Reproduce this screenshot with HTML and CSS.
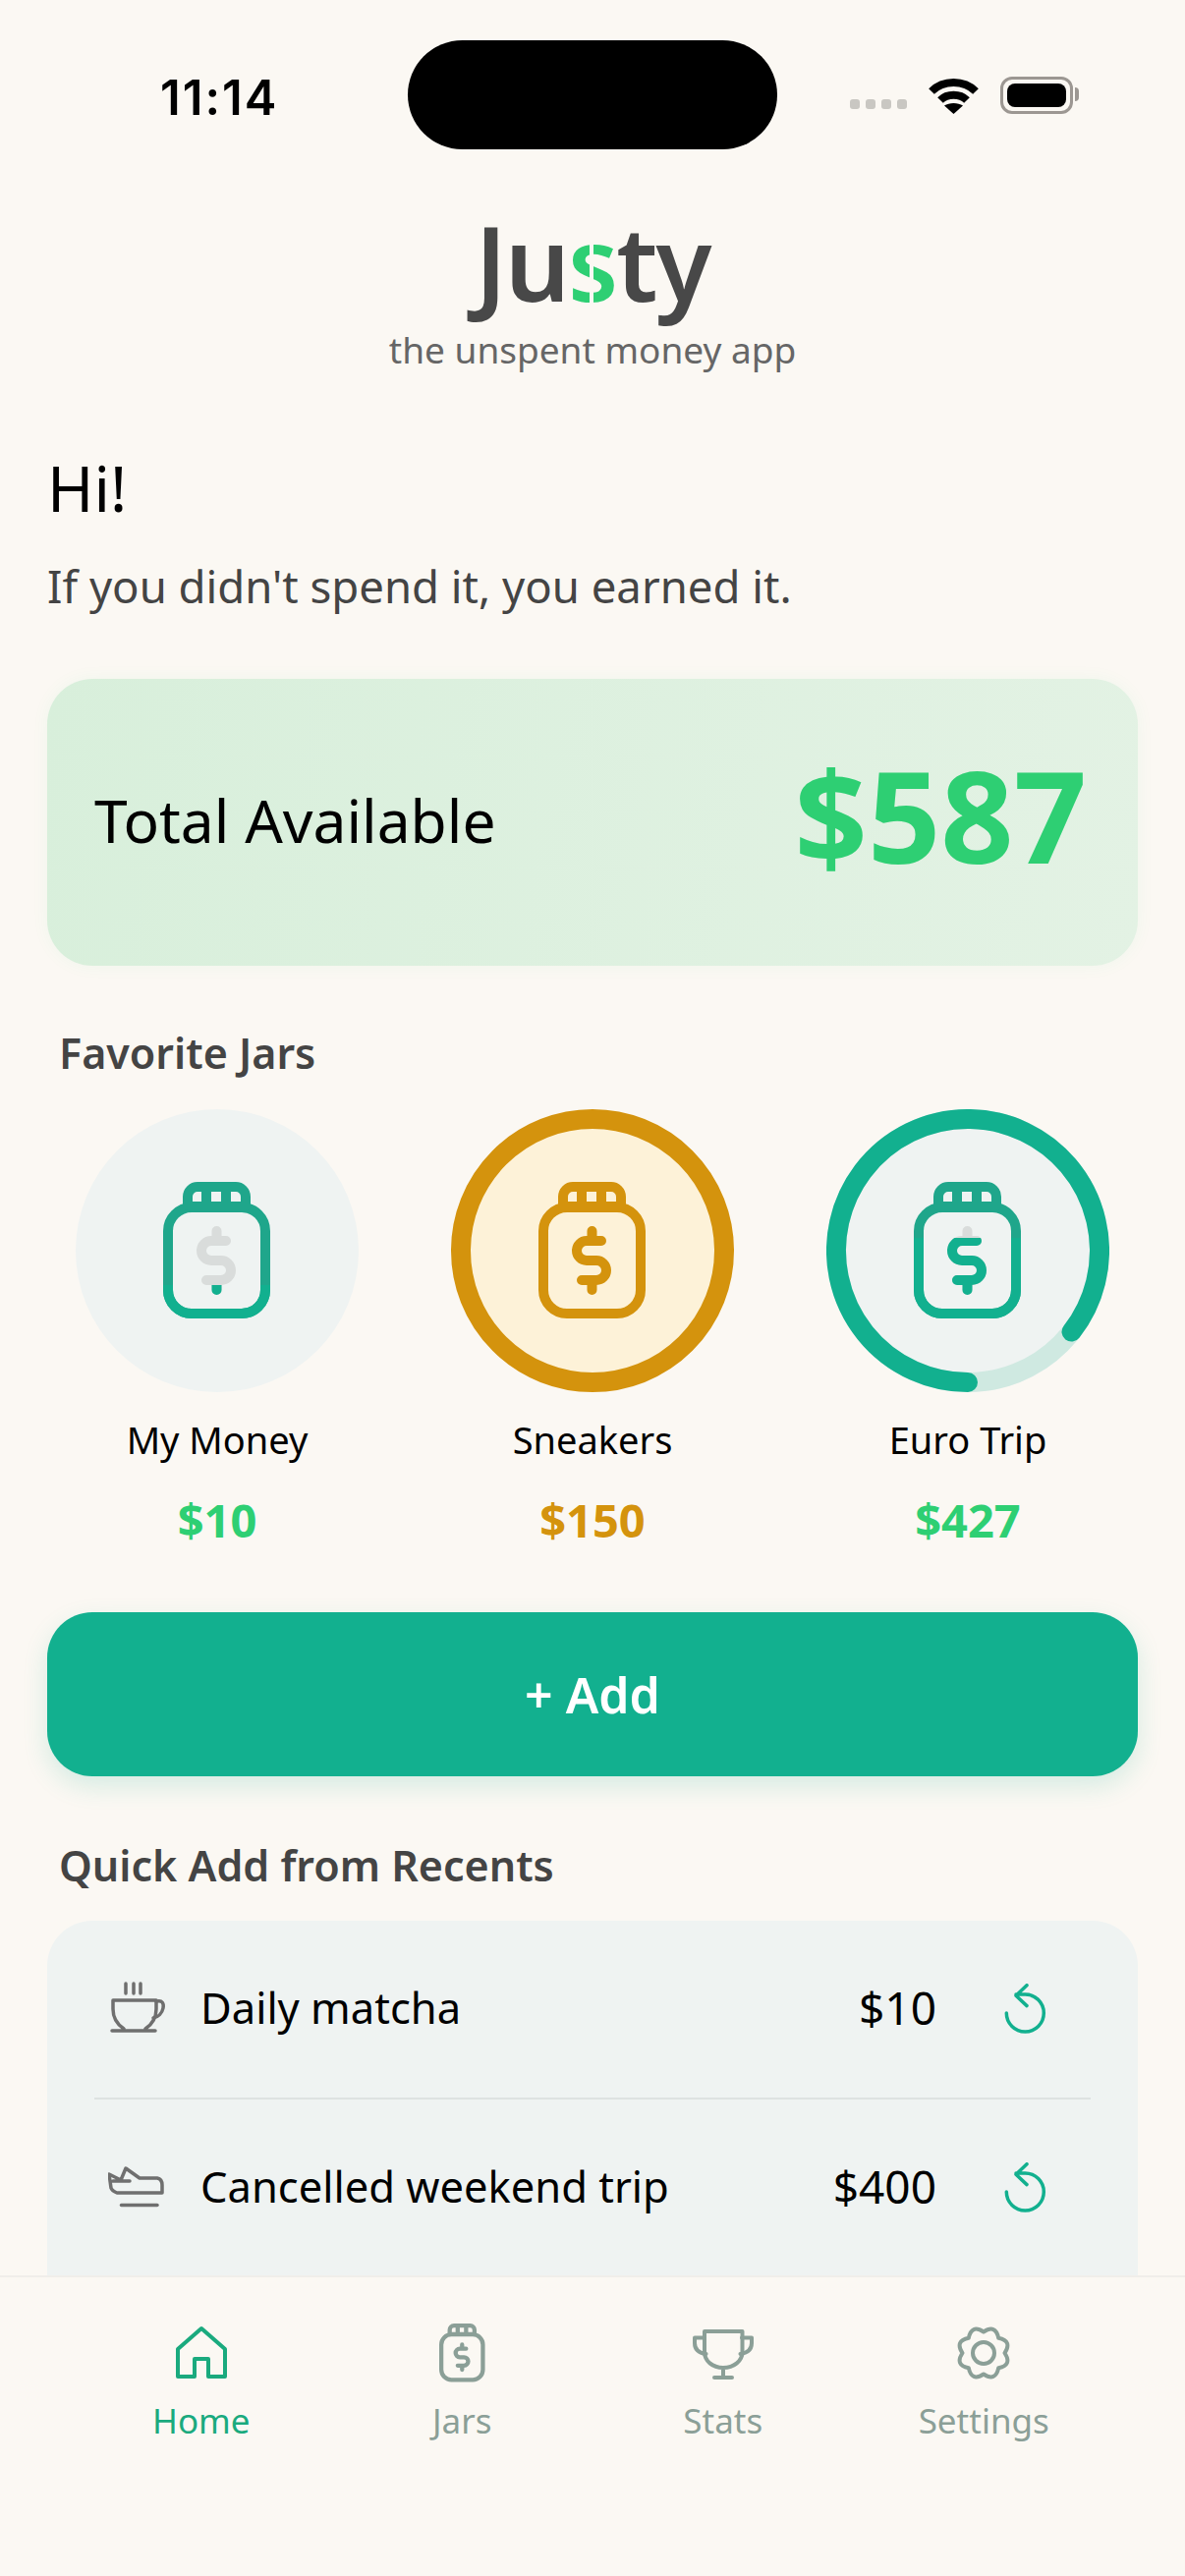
FILE: index.html
```html
<!DOCTYPE html>
<html>

<head>
  <meta name="viewport" content="width=device-width, initial-scale=1">
  <link rel="stylesheet" href="styles.css">
</head>

<body>
  <svg class="defs" width="0" height="0">
    <defs>
      <symbol id="jar-body" viewBox="0 0 110 140">
        <rect x="5" y="26" width="99" height="108" rx="24" />
        <path d="M25 24V15a10 10 0 0 1 10-10H74a10 10 0 0 1 10 10V24" />
        <path d="M44 6V24M64 6V24M25 25H84" stroke-linecap="butt" />
      </symbol>
      <symbol id="jar-dollar" viewBox="0 0 110 140">
        <path d="M64 60H49a10 10 0 0 0 0 20H59a10 10 0 0 1 0 20H44M54.500 50V60M54.500 100V110" />
      </symbol>
      <clipPath id="fill-low">
        <rect x="0" y="105" width="110" height="35" />
      </clipPath>
      <clipPath id="fill-high">
        <rect x="0" y="57" width="110" height="83" />
      </clipPath>
      <symbol id="undo" viewBox="0 0 60 60">
        <path d="M11.300 30A19 19 0 1 0 30.300 11H21M32 1.700L21 12.300L32 22.600" />
      </symbol>
    </defs>
  </svg>

  <div class="screen">
    <header class="status">
      <span class="status-time">11:14</span>
      <span class="island"></span>
      <div class="status-icons">
        <span class="signal"><i></i><i></i><i></i><i></i></span>
        <svg class="wifi" viewBox="0 0 51 38">
          <path d="M3 15C15 3 36 3 48 15" />
          <path d="M12 24C19 17 32 17 39 24" />
          <path d="M25.500 38L16 29.500C21 26 30 26 35 29.500Z" class="wifi-dot" />
        </svg>
        <span class="battery"><i></i></span>
      </div>
    </header>

    <main class="content">
      <div class="brand">
        <h1 class="logo">Ju<span class="logo-s">s</span>ty</h1>
        <p class="tagline">the unspent money app</p>
      </div>

      <h2 class="hello">Hi!</h2>
      <p class="subline">If you didn't spend it, you earned it.</p>

      <section class="total">
        <span class="total-label">Total Available</span>
        <span class="total-value">$587</span>
      </section>

      <h3 class="section-title">Favorite Jars</h3>
      <div class="jars">
        <div class="jar">
          <div class="jar-circle">
            <svg class="jar-icon" viewBox="0 0 110 140">
              <use class="stroke-dim" href="#jar-body" />
              <use class="stroke-grey" href="#jar-dollar" />
              <g clip-path="url(#fill-low)">
                <use class="stroke-teal" href="#jar-body" />
                <use class="stroke-teal" href="#jar-dollar" />
              </g>
            </svg>
          </div>
          <div class="jar-name">My Money</div>
          <div class="jar-amount">$10</div>
        </div>
        <div class="jar">
          <div class="jar-circle jar-circle--full">
            <svg class="jar-icon" viewBox="0 0 110 140">
              <use class="stroke-amber" href="#jar-body" />
              <use class="stroke-amber" href="#jar-dollar" />
            </svg>
          </div>
          <div class="jar-name">Sneakers</div>
          <div class="jar-amount jar-amount--amber">$150</div>
        </div>
        <div class="jar">
          <div class="jar-circle">
            <svg class="jar-ring" viewBox="0 0 288 288">
              <circle class="ring-track" cx="144" cy="144" r="134" />
              <path class="ring-value" d="M144 278A134 134 0 1 1 249.500 226.600" />
            </svg>
            <svg class="jar-icon" viewBox="0 0 110 140">
              <use class="stroke-dim" href="#jar-body" />
              <use class="stroke-grey" href="#jar-dollar" />
              <g clip-path="url(#fill-high)">
                <use class="stroke-teal" href="#jar-body" />
                <use class="stroke-teal" href="#jar-dollar" />
              </g>
            </svg>
          </div>
          <div class="jar-name">Euro Trip</div>
          <div class="jar-amount">$427</div>
        </div>
      </div>

      <button class="add-btn">+ Add</button>

      <h3 class="section-title section-title--recents">Quick Add from Recents</h3>
      <section class="recents">
        <div class="recent">
          <svg class="recent-icon" viewBox="0 0 60 60">
            <path d="M18 4V14M26 4V14M33 4V14" />
            <path d="M5 21H49V30C49 40 44 46 38 50M5 21V30C5 40 10 46 16 50M4 52H48" />
            <path d="M49 22H50C55 21 57 24 56 29C55 34 51 38 46 39" />
          </svg>
          <span class="recent-name">Daily matcha</span>
          <span class="recent-amount">$10</span>
          <svg class="recent-undo" viewBox="0 0 60 60"><use href="#undo" /></svg>
        </div>
        <div class="recent">
          <svg class="recent-icon" viewBox="0 0 60 60">
            <path d="M1 16L13 22L18 10L32 20H50Q55 21 55 27V35H9Q4 33 3 30ZM5 23H22" />
            <path d="M13.500 47.500H50" />
          </svg>
          <span class="recent-name">Cancelled weekend trip</span>
          <span class="recent-amount">$400</span>
          <svg class="recent-undo" viewBox="0 0 60 60"><use href="#undo" /></svg>
        </div>
      </section>
    </main>

    <nav class="tabs">
      <a class="tab tab--active">
        <svg class="tab-icon" viewBox="0 0 60 60">
          <path d="M30 5L6 26V54H23V36H37V54H54V26Z" />
        </svg>
        <span>Home</span>
      </a>
      <a class="tab">
        <svg class="tab-icon tab-icon--jar" viewBox="0 0 110 140">
          <use href="#jar-body" />
          <use href="#jar-dollar" />
        </svg>
        <span>Jars</span>
      </a>
      <a class="tab">
        <svg class="tab-icon tab-icon--wide" viewBox="0 0 70 60">
          <path d="M16 8H54.500V29C54.500 38 46 45 35 45C24 45 16 38 16 29ZM35 45V55M26 55H44" />
          <path d="M16 14.500H6V20C6 26 10 30 17.500 31M54 14.500H64V20C64 26 60 30 52.500 31" />
        </svg>
        <span>Stats</span>
      </a>
      <a class="tab">
        <svg class="tab-icon" viewBox="0 0 60 60">
          <path d="M30 8.500Q42.250 .44 45.200 14.800Q59.560 17.750 51.500 30Q59.560 42.250 45.200 45.200Q42.250 59.560 30 51.500Q17.750 59.560 14.800 45.200Q.44 42.250 8.500 30Q.44 17.750 14.800 14.800Q17.750 .44 30 8.500Z" />
          <circle cx="30" cy="30" r="11" />
        </svg>
        <span>Settings</span>
      </a>
    </nav>
  </div>
</body>

</html>
```

FILE: styles.css
```css
:root {
  --bg: #fbf8f3;
  --teal: #12b08f;
  --teal-dim: #1fa68b;
  --green: #2ecf73;
  --amber: #d4930d;
  --panel: #eff3f2;
  --ink: #444;
  --muted: #8b9f97;
}

html,
body {
  margin: 0;
  background-color: var(--bg);
}

body {
  font-family: "Noto Sans", "Lato", sans-serif;
  color: #000;
}

.defs {
  display: block;
  height: 0;
}

.screen {
  height: 2622px;
  display: flex;
  flex-direction: column;
  overflow: hidden;
}

/* status bar */
.status {
  display: flex;
  align-items: center;
  height: 111px;
  padding: 41px 0 0 163px;
  flex: none;
}

.status-time {
  width: 252px;
  padding-top: 5px;
  font-family: "Inter", sans-serif;
  font-size: 49px;
  font-weight: 600;
  letter-spacing: 2px;
}

.island {
  width: 376px;
  height: 111px;
  border-radius: 56px;
  background-color: #000;
}

.status-icons {
  display: flex;
  align-items: center;
  margin-left: 74px;
}

.signal {
  display: flex;
  gap: 6px;
  margin: 18px 22px 0 0;
}

.signal i {
  width: 10px;
  height: 10px;
  border-radius: 3px;
  background-color: #c9c7c2;
}

.wifi {
  width: 51px;
  height: 38px;
  fill: none;
  stroke: #000;
  stroke-width: 8;
}

.wifi-dot {
  fill: #000;
  stroke: none;
}

.battery {
  position: relative;
  box-sizing: border-box;
  width: 74px;
  height: 38px;
  margin-left: 22px;
  padding: 4px;
  border: 3px solid #9c9792;
  border-radius: 12px;
}

.battery i {
  display: block;
  height: 100%;
  border-radius: 8px;
  background-color: #000;
}

.battery::after {
  content: "";
  position: absolute;
  top: 8px;
  right: -9px;
  width: 4px;
  height: 14px;
  border-radius: 0 6px 6px 0;
  background-color: #9c9792;
}

/* page content */
.content {
  flex: 1;
  min-height: 0;
  padding: 0 48px;
  overflow: hidden;
}

.brand {
  margin-top: 62px;
  text-align: center;
}

.logo {
  margin: 0;
  font-size: 104px;
  line-height: 106px;
  font-weight: 600;
  letter-spacing: -2px;
  color: #484848;
}

.logo-s {
  position: relative;
  color: var(--green);
}

.logo-s::after {
  content: "";
  position: absolute;
  top: 20px;
  bottom: 16px;
  left: 50%;
  width: 4px;
  margin-left: -3px;
  background-color: var(--bg);
}

.tagline {
  margin: 14px 0 0;
  font-size: 37px;
  line-height: 44px;
  color: #666;
}

.hello {
  margin: 81px 0 0;
  font-size: 64px;
  line-height: 76px;
  font-weight: 400;
}

.subline {
  margin: 33px 0 0;
  font-size: 45.500px;
  line-height: 56px;
  color: var(--ink);
}

.total {
  display: flex;
  align-items: center;
  justify-content: space-between;
  box-sizing: border-box;
  height: 292px;
  margin-top: 67px;
  padding: 0 52px 6px 48px;
  border-radius: 46px;
  background: linear-gradient(100deg, #d8efdb, #e3f2e4);
  box-shadow: 0 0 18px rgba(46, 207, 115, 0.05);
}

.total-label {
  font-size: 60.500px;
}

.total-value {
  margin-bottom: 10px;
  font-size: 130px;
  line-height: 150px;
  font-weight: 700;
  color: var(--green);
}

.section-title {
  margin: 62px 0 0 12px;
  font-size: 43px;
  line-height: 54px;
  font-weight: 600;
  color: var(--ink);
}

.jars {
  display: grid;
  grid-template-columns: repeat(3, 382px);
  margin: 30px -18px 0;
}

.jar {
  display: flex;
  flex-direction: column;
  align-items: center;
}

.jar-circle {
  position: relative;
  display: flex;
  align-items: center;
  justify-content: center;
  box-sizing: border-box;
  width: 288px;
  height: 288px;
  border-radius: 50%;
  background-color: var(--panel);
}

.jar-circle--full {
  border: 20px solid var(--amber);
  background-color: #fdf2d8;
}

.jar-icon {
  width: 110px;
  height: 140px;
}

.jar-icon use,
.tab-icon--jar use {
  fill: none;
  stroke-width: 10;
  stroke-linecap: round;
  stroke-linejoin: round;
}

.stroke-dim {
  stroke: var(--teal-dim);
}

.stroke-grey {
  stroke: #d9dcdb;
}

.stroke-teal {
  stroke: var(--teal);
}

.stroke-amber {
  stroke: var(--amber);
}

.jar-ring {
  position: absolute;
  inset: 0;
  fill: none;
  stroke-width: 20;
}

.ring-track {
  stroke: #cfe9e1;
}

.ring-value {
  stroke: var(--teal);
  stroke-linecap: round;
}

.jar-name {
  margin-top: 23px;
  font-size: 38px;
  line-height: 50px;
}

.jar-amount {
  margin-top: 29px;
  font-size: 47px;
  line-height: 56px;
  font-weight: 700;
  color: var(--green);
}

.jar-amount--amber {
  color: var(--amber);
}

.add-btn {
  display: block;
  width: 100%;
  height: 167px;
  margin-top: 66px;
  border: 0;
  border-radius: 46px;
  background-color: var(--teal);
  color: #fff;
  font-family: inherit;
  font-size: 50px;
  font-weight: 600;
  box-shadow: 0 10px 26px rgba(18, 176, 143, 0.16);
}

.section-title--recents {
  margin-top: 64px;
}

.recents {
  margin-top: 29px;
  padding: 0 48px 46px;
  border-radius: 46px;
  background-color: var(--panel);
}

.recent {
  display: flex;
  align-items: center;
  height: 180px;
  padding: 0 37px 0 14px;
  font-size: 46px;
}

.recent + .recent {
  border-top: 2px solid #dde2e1;
}

.recent-icon {
  width: 60px;
  height: 60px;
  margin-right: 34px;
  fill: none;
  stroke: #6f6f6f;
  stroke-width: 3.500;
  stroke-linecap: round;
  stroke-linejoin: round;
}

.recent-name {
  flex: 1;
  margin-bottom: 5px;
  font-size: 43.500px;
}

.recent-amount {
  margin: 0 60px 5px 0;
}

.recent-undo {
  width: 60px;
  height: 60px;
  margin-top: 8px;
  fill: none;
  stroke: var(--teal);
  stroke-width: 3.500;
  stroke-linecap: round;
  stroke-linejoin: round;
}

/* bottom tabs */
.tabs {
  display: grid;
  grid-template-columns: repeat(4, 1fr);
  flex: none;
  height: 257px;
  padding: 47px 72px 0;
  border-top: 2px solid #f0eeea;
  background-color: var(--bg);
}

.tab {
  display: flex;
  flex-direction: column;
  align-items: center;
  gap: 17px;
  font-size: 35px;
  line-height: 44px;
  color: var(--muted);
}

.tab--active {
  color: #1aaa7e;
}

.tab-icon {
  width: 60px;
  height: 60px;
  fill: none;
  stroke: currentColor;
  stroke-width: 4;
  stroke-linecap: round;
  stroke-linejoin: round;
}

.tab-icon--jar {
  width: 47px;
}

.tab-icon--wide {
  width: 70px;
}
```
